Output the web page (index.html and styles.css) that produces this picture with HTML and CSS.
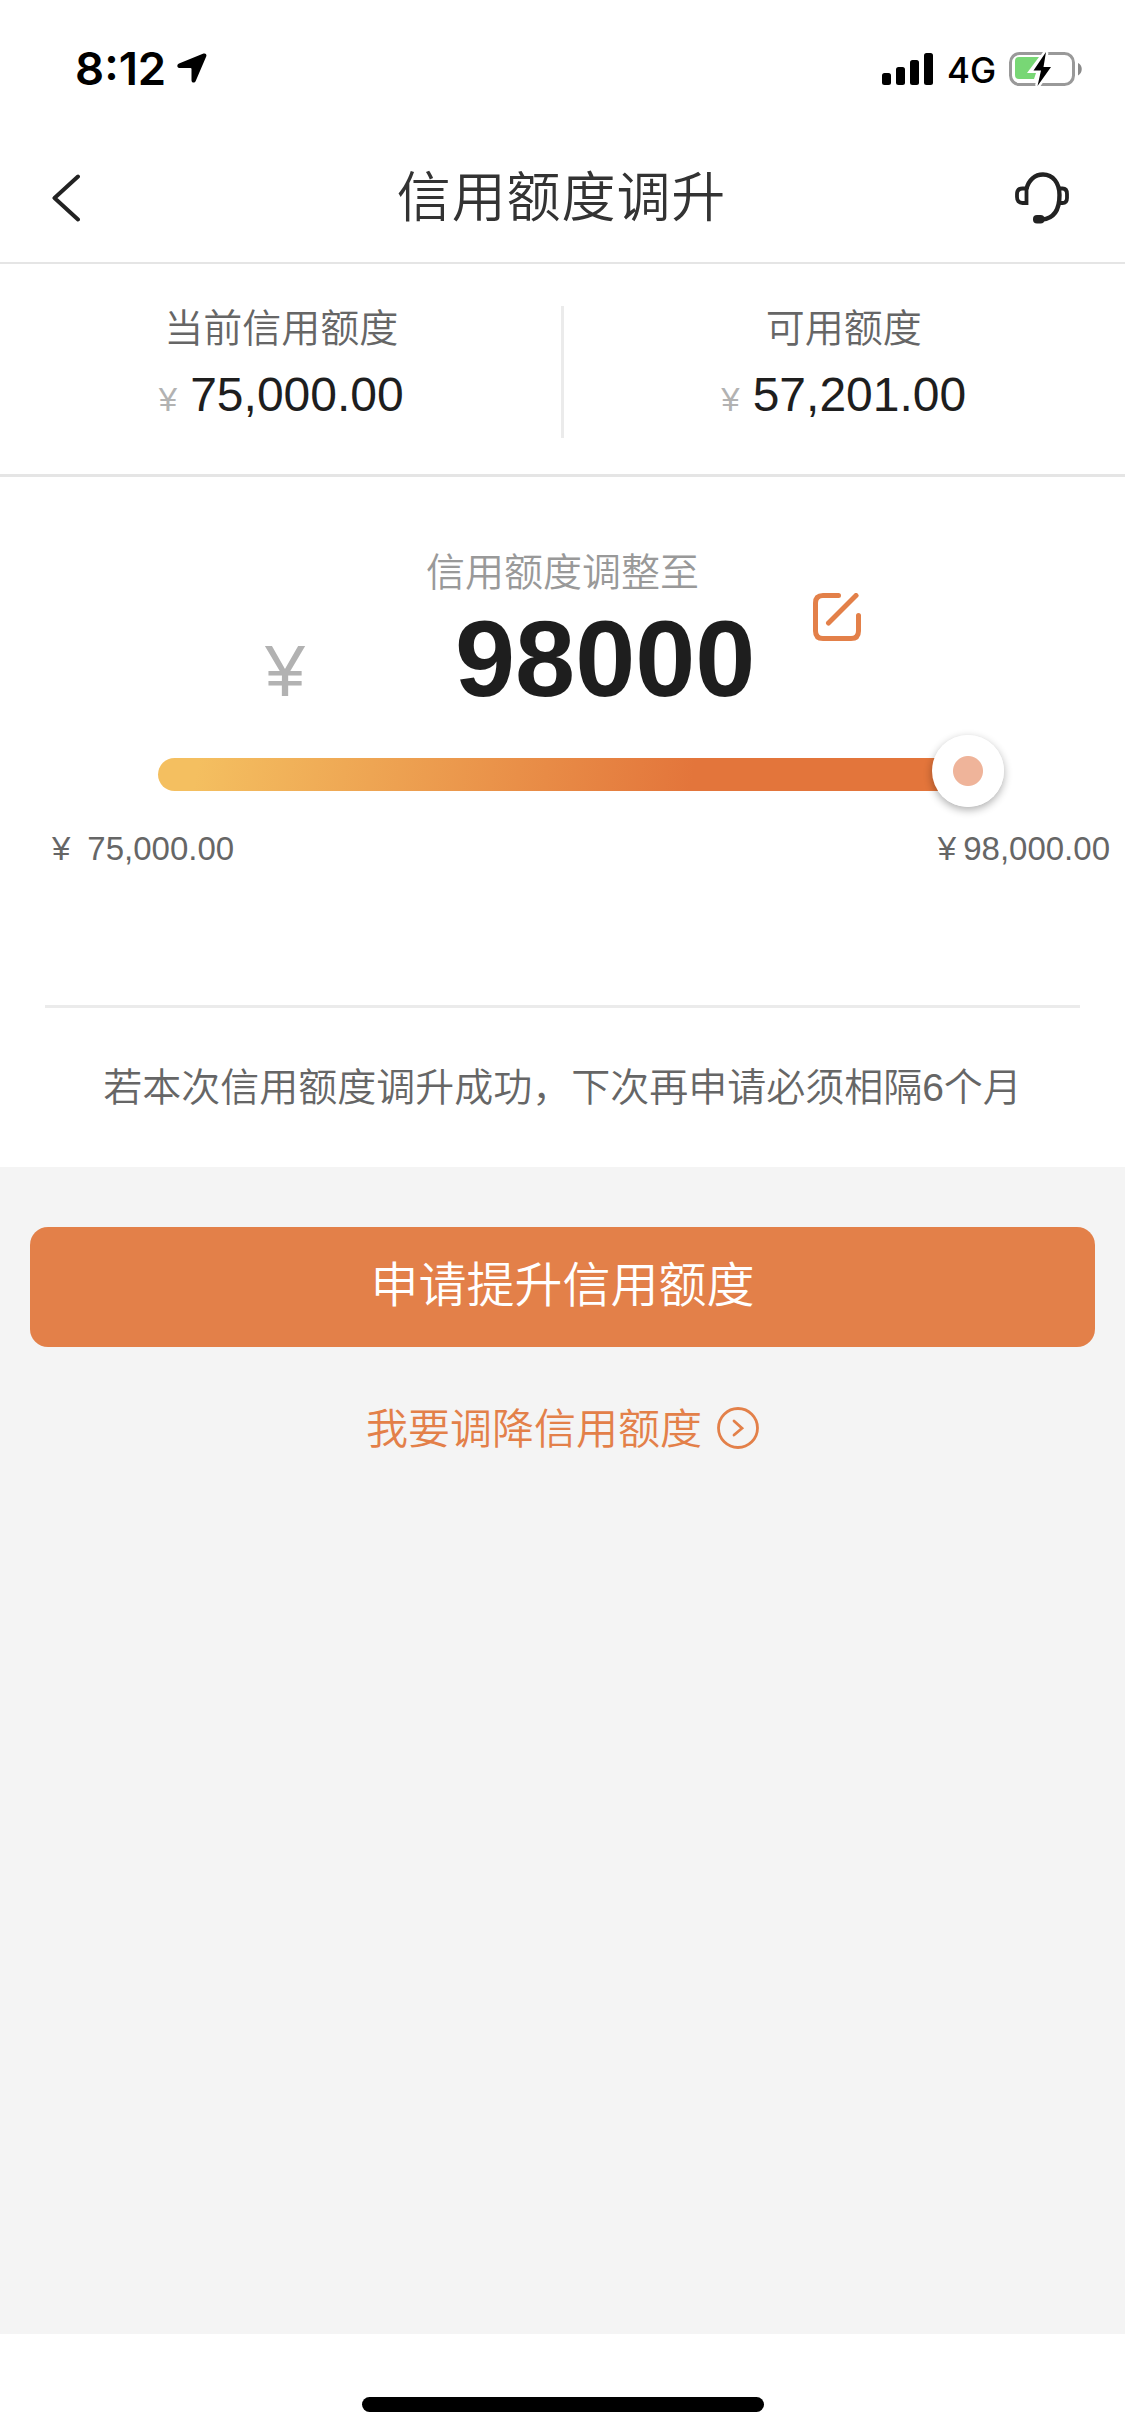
FILE: index.html
```html
<!DOCTYPE html>
<html lang="zh-CN">
<head>
<meta charset="utf-8">
<title>信用额度调升</title>
<link rel="stylesheet" href="styles.css">
</head>
<body>
<div class="screen">
  <div class="status">
    <span class="time">8:12</span>
    <svg class="locate" width="30" height="30" viewBox="0 0 30 30"><path d="M26.500 .6 2 10.600C-.4 11.700-.1 15 2.300 15H13.500Q14.500 15 14.500 16V27.200C14.500 30 17.700 30.300 18.700 28L29.200 3.500C30 1.500 28.600-.2 26.500.6Z"/></svg>
    <svg class="signal" width="51" height="32" viewBox="0 0 51 32"><rect x="0" y="20" width="9" height="12" rx="2.500"/><rect x="14" y="14" width="9" height="18" rx="2.500"/><rect x="28" y="7" width="9" height="25" rx="2.500"/><rect x="42" y="0" width="9" height="32" rx="2.500"/></svg>
    <span class="network">4G</span>
    <svg class="battery" width="74" height="36" viewBox="0 0 74 36">
      <rect x="1.500" y="2.500" width="63" height="31" rx="9" fill="none" stroke="#999" stroke-width="3"/>
      <path d="M69 12C74 14 74 22 69 24.500Z" fill="#8a8a8a"/>
      <path d="M10 6H30L18 22H27L25 28H10Q6 28 6 24V10Q6 6 10 6Z" fill="#78d775"/>
      <path d="M37 1 24.500 19.500H32L28.500 35 42 16H34.500Z" fill="#000" stroke="#fff" stroke-width="5" paint-order="stroke"/>
    </svg>
  </div>
  <header class="header">
    <svg class="back" width="28" height="48" viewBox="0 0 28 48"><path d="M26 2.500 2.500 24 26 45.500" fill="none" stroke="#222" stroke-width="4" stroke-linecap="round" stroke-linejoin="round"/></svg>
    <h1 class="title">信用额度调升</h1>
    <svg class="service" width="54" height="52" viewBox="0 0 54 52" fill="none" stroke="#222" stroke-width="4.400">
      <path d="M11.500 17C13.500 8 20 2.500 28 2.500C38 2.500 44.500 11 44.500 23C44.500 37 39.500 46.500 27 47.500"/>
      <path d="M11.500 16.500V31H7.500Q2 31 2 25V22Q2 16.500 7.500 16.500Z" stroke-width="3.800"/>
      <path d="M45 16.500H47.500Q52 16.500 52 22V26Q52 31 47.500 31H44.500" stroke-width="3.800"/>
      <rect x="18" y="43" width="11.500" height="8.500" rx="4" fill="#222" stroke="none"/>
    </svg>
  </header>
  <section class="limits">
    <div class="limit">
      <div class="limit-label">当前信用额度</div>
      <div class="limit-value"><span class="yen">¥</span>75,000.00</div>
    </div>
    <div class="divider"></div>
    <div class="limit">
      <div class="limit-label">可用额度</div>
      <div class="limit-value"><span class="yen">¥</span>57,201.00</div>
    </div>
  </section>
  <section class="adjust">
    <div class="adjust-label">信用额度调整至</div>
    <div class="adjust-row">
      <span class="adjust-yen">¥</span>
      <span class="adjust-value">98000</span>
      <svg class="edit" width="48" height="48" viewBox="0 0 48 48" fill="none" stroke="#e38049" stroke-width="5" stroke-linecap="round"><path d="M25.500 2.500H10Q2.500 2.500 2.500 10V38Q2.500 45.500 10 45.500H38Q45.500 45.500 45.500 38V22.500"/><path d="M15.500 30 43 2.500"/></svg>
    </div>
    <div class="slider">
      <div class="track"></div>
      <div class="thumb"></div>
    </div>
    <div class="range">
      <span><span class="range-yen">¥</span>75,000.00</span>
      <span><span class="range-yen range-yen-near">¥</span>98,000.00</span>
    </div>
    <p class="notice">若本次信用额度调升成功，下次再申请必须相隔6个月</p>
  </section>
  <main class="actions">
    <button class="submit">申请提升信用额度</button>
    <a class="lower"><span>我要调降信用额度</span>
      <svg width="42" height="42" viewBox="0 0 42 42" fill="none" stroke="#e38049" stroke-width="2.800" stroke-linecap="round"><circle cx="21" cy="21" r="19.500"/><path d="M17 14 25 21.200 17 28"/></svg>
    </a>
  </main>
  <footer class="home"><div class="home-bar"></div></footer>
</div>
</body>
</html>
```
FILE: styles.css
```css
* { box-sizing: border-box; }
body {
  margin: 0;
  background: #fff;
  font-family: "Liberation Sans", "Noto Sans CJK SC", sans-serif;
  font-weight: 400;
}
.screen {
  width: 1125px;
  height: 2436px;
  display: flex;
  flex-direction: column;
}
.status {
  height: 132px;
  padding: 6px 42px 0 75px;
  display: flex;
  align-items: center;
}
.time {
  width: 102px;
  font: 600 45.500px/60px Inter, sans-serif;
}
.locate { margin-top: -3px; }
.signal { margin-left: auto; }
.network {
  width: 61px;
  margin-left: 14px;
  padding-top: 1px;
  font: 500 35px/60px Inter, sans-serif;
}
.battery { margin-left: 1px; }
.header {
  height: 132px;
  padding: 2px 56px 0 52px;
  display: flex;
  align-items: center;
  justify-content: space-between;
  border-bottom: 2px solid #e5e5e5;
}
.title {
  margin: 0 0 0 28px;
  font-size: 54px;
  line-height: 70px;
  font-weight: 350;
  letter-spacing: .9px;
  color: #333;
}
.limits {
  height: 213px;
  padding: 42px 0 36px;
  display: flex;
  border-bottom: 3px solid #e5e5e5;
}
.limit {
  flex: 1;
  text-align: center;
  margin-top: -4px;
}
.limit:first-child { padding-left: 1px; }
.limit:last-child { padding-right: 1px; }
.divider {
  width: 3px;
  margin-left: -1px;
  background: #ebebeb;
}
.limit-label {
  font-size: 39px;
  line-height: 54px;
  font-weight: 350;
  color: #666;
}
.limit-value {
  margin-top: 9px;
  font-size: 48px;
  line-height: 60px;
  color: #1e1e1e;
}
.yen {
  margin-right: 13px;
  font-size: 33px;
  color: #b2b2b2;
}
.adjust {
  height: 690px;
  padding-top: 76px;
}
.adjust-label {
  text-align: center;
  font-size: 39px;
  line-height: 40px;
  font-weight: 350;
  color: #999;
}
.adjust-row {
  height: 134px;
  padding-left: 265px;
  display: flex;
  align-items: baseline;
}
.adjust-yen {
  width: 190px;
  font-size: 72px;
  color: #b2b2b2;
}
.adjust-value {
  width: 300px;
  font-size: 108px;
  line-height: 131px;
  font-weight: 700;
  color: #1e1e1e;
}
.edit {
  margin-left: 58px;
  align-self: flex-start;
}
.slider {
  height: 72px;
  margin: 8px 121px 0 158px;
  display: flex;
  align-items: center;
}
.track {
  width: 810px;
  height: 33px;
  margin-top: 7px;
  border-radius: 17px;
  background: linear-gradient(100deg, #f4bf60 5%, #e3753b 66%);
}
.thumb {
  flex: none;
  width: 72px;
  height: 72px;
  margin-left: -36px;
  border-radius: 50%;
  background: radial-gradient(circle, #efb49a 14.500px, #fff 15.500px);
  box-shadow: 0 3px 9px rgba(0, 0, 0, .32);
}
.range {
  margin: 22px 15px 0 52px;
  display: flex;
  justify-content: space-between;
  font-size: 33px;
  line-height: 40px;
  color: #666;
}
.range-yen { margin-right: 17px; }
.range-yen-near { margin-right: 7px; }
.notice {
  margin: 136px 45px 0;
  padding-top: 50px;
  border-top: 3px solid #ebebeb;
  text-align: center;
  font-size: 39px;
  line-height: 60px;
  font-weight: 350;
  color: #666;
}
.actions {
  flex: 1;
  padding: 60px 30px 0;
  background: #f4f4f4;
}
.submit {
  display: block;
  width: 100%;
  height: 120px;
  padding: 0 0 2px;
  border: 0;
  border-radius: 18px;
  background: #e38049;
  color: #fff;
  font-family: inherit;
  font-size: 48px;
  line-height: 60px;
  font-weight: 350;
}
.lower {
  margin-top: 54px;
  display: flex;
  align-items: center;
  justify-content: center;
  gap: 15px;
  font-size: 42px;
  line-height: 54px;
  font-weight: 350;
  color: #e38049;
}
.lower span {
  margin-bottom: -2px;
  padding-top: 2px;
}
.home {
  height: 102px;
  padding-top: 63px;
}
.home-bar {
  width: 402px;
  height: 15px;
  margin: 0 auto;
  border-radius: 8px;
  background: #000;
}
```
